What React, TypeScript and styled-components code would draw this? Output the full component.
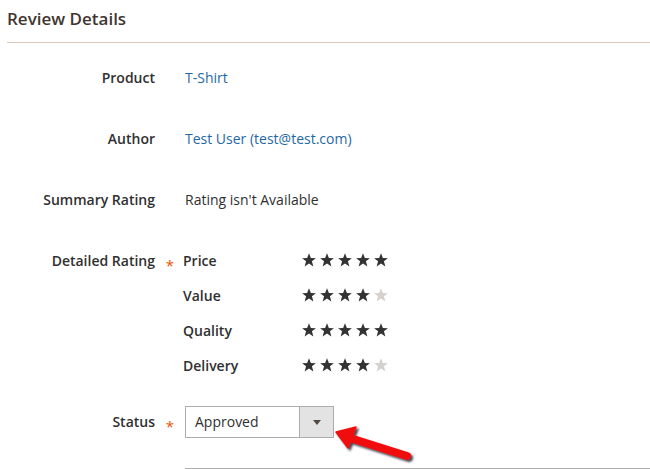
import React from "react";
import styled, { createGlobalStyle } from "styled-components";

const Global = createGlobalStyle`
  html, body { margin: 0; padding: 0; background: #fff; }
  body { font-family: "Open Sans", "Liberation Sans", sans-serif; color: #303030; overflow: hidden; }
`;

const Page = styled.div`
  position: relative;
  padding-left: 7px;
  height: 469px;
  overflow: hidden;
`;

const Title = styled.div`
  font-size: 17px;
  font-weight: 600;
  line-height: 20px;
  color: #41362f;
  padding: 9px 0 13px;
  border-bottom: 1px solid #d9c9b8;
  margin-bottom: 25px;
`;

const Field = styled.div<{ $gap: number }>`
  display: flex;
  align-items: flex-start;
  margin-bottom: ${(p) => p.$gap}px;
`;

const Label = styled.div<{ $tall?: boolean }>`
  width: 148px;
  flex: none;
  text-align: right;
  font-size: 14px;
  font-weight: 600;
  line-height: 20px;
  padding-top: ${(p) => (p.$tall ? 6 : 0)}px;
`;

const Req = styled.div<{ $tall?: boolean }>`
  width: 30px;
  flex: none;
  text-align: center;
  color: #eb5202;
  font-size: 15px;
  line-height: 20px;
  padding-top: ${(p) => (p.$tall ? 10 : 4)}px;
`;

const Control = styled.div`
  flex: 1;
  font-size: 14px;
  line-height: 20px;
`;

const Link = styled.a`
  color: #1f68a3;
  text-decoration: none;
`;

const Ratings = styled.div`
  display: flex;
  flex-direction: column;
  gap: 15px;
  margin-left: -2px;
`;

const RatingRow = styled.div`
  display: flex;
  align-items: center;
  height: 20px;
`;

const RatingName = styled.div`
  width: 119px;
  font-weight: 600;
  font-size: 14px;
`;

const Stars = styled.div`
  display: flex;
  gap: 4px;
  margin-top: -3px;
`;

const StarIcon = styled.svg<{ $on: boolean }>`
  width: 14px;
  height: 14px;
  display: block;
  fill: ${(p) => (p.$on ? "#333333" : "#d6d1cc")};
`;

const Select = styled.div`
  display: flex;
  width: 149px;
  height: 32px;
  box-sizing: border-box;
  border: 1px solid #adadad;
  background: #fff;
`;

const SelectText = styled.div`
  flex: 1;
  padding-left: 9px;
  font-size: 14px;
  line-height: 30px;
  color: #303030;
`;

const SelectButton = styled.div`
  width: 33px;
  border-left: 1px solid #adadad;
  background: #e3e3e3;
  display: flex;
  align-items: center;
  justify-content: center;
`;

const Caret = styled.div`
  width: 0;
  height: 0;
  border-left: 4px solid transparent;
  border-right: 4px solid transparent;
  border-top: 5px solid #514943;
  margin-top: 1px;
`;

const NextBox = styled.div`
  margin-left: 178px;
  height: 80px;
  border: 1px solid #adadad;
  border-right: none;
`;

const Arrow = styled.svg`
  position: absolute;
  left: 328px;
  top: 418px;
  width: 96px;
  height: 50px;
  overflow: visible;
`;

const Star: React.FC<{ on: boolean }> = ({ on }) => (
  <StarIcon $on={on} viewBox="0 0 24 24">
    <polygon points="12,0.5 15.2,8.6 23.8,8.9 17,14.3 19.5,23 12,18 4.5,23 7,14.3 0.2,8.9 8.8,8.6" />
  </StarIcon>
);

const ratings: [string, number][] = [
  ["Price", 5],
  ["Value", 4],
  ["Quality", 5],
  ["Delivery", 4],
];

export default function App() {
  return (
    <>
      <Global />
      <Page>
        <Title>Review Details</Title>
        <Field $gap={41}>
          <Label>Product</Label>
          <Req />
          <Control>
            <Link href="#">T-Shirt</Link>
          </Control>
        </Field>
        <Field $gap={41}>
          <Label>Author</Label>
          <Req />
          <Control>
            <Link href="#">Test User (test@test.com)</Link>
          </Control>
        </Field>
        <Field $gap={41}>
          <Label>Summary Rating</Label>
          <Req />
          <Control>Rating isn't Available</Control>
        </Field>
        <Field $gap={30}>
          <Label>Detailed Rating</Label>
          <Req>*</Req>
          <Control>
            <Ratings>
              {ratings.map(([name, n]) => (
                <RatingRow key={name}>
                  <RatingName>{name}</RatingName>
                  <Stars>
                    {[0, 1, 2, 3, 4].map((i) => (
                      <Star key={i} on={i < n} />
                    ))}
                  </Stars>
                </RatingRow>
              ))}
            </Ratings>
          </Control>
        </Field>
        <Field $gap={30}>
          <Label $tall>Status</Label>
          <Req $tall>*</Req>
          <Control>
            <Select>
              <SelectText>Approved</SelectText>
              <SelectButton>
                <Caret />
              </SelectButton>
            </Select>
          </Control>
        </Field>
        <NextBox />
        <Arrow viewBox="0 0 96 50">
          <defs>
            <filter id="sh" x="-20%" y="-30%" width="150%" height="180%">
              <feDropShadow dx="2" dy="2" stdDeviation="1.2" floodColor="#1a1a2a" floodOpacity="0.85" />
            </filter>
          </defs>
          <g filter="url(#sh)" fill="#f01010" stroke="#f01010">
            <line x1="22" y1="20" x2="79" y2="38" strokeWidth="8" strokeLinecap="round" />
            <polygon points="8,14 28,9 20,30" strokeWidth="1.5" strokeLinejoin="round" />
          </g>
        </Arrow>
      </Page>
    </>
  );
}
